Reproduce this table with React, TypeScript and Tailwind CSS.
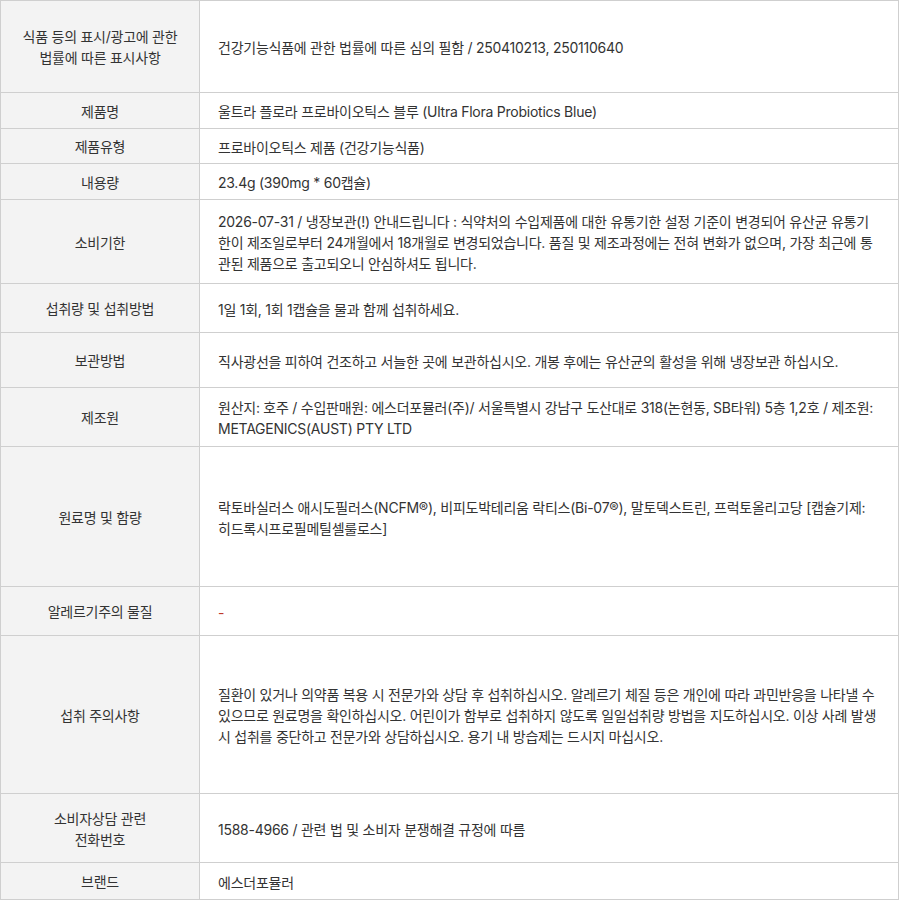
import React from "react";

const rows: { label: string[]; value: React.ReactNode; h: string }[] = [
  {
    label: ["식품 등의 표시/광고에 관한", "법률에 따른 표시사항"],
    value: "건강기능식품에 관한 법률에 따른 심의 필함 / 250410213, 250110640",
    h: "h-[92px]",
  },
  {
    label: ["제품명"],
    value: "울트라 플로라 프로바이오틱스 블루 (Ultra Flora Probiotics Blue)",
    h: "h-[36px]",
  },
  { label: ["제품유형"], value: "프로바이오틱스 제품 (건강기능식품)", h: "h-[35px]" },
  { label: ["내용량"], value: "23.4g (390mg * 60캡슐)", h: "h-[36px]" },
  {
    label: ["소비기한"],
    value:
      "2026-07-31 / 냉장보관(!) 안내드립니다 : 식약처의 수입제품에 대한 유통기한 설정 기준이 변경되어 유산균 유통기한이 제조일로부터 24개월에서 18개월로 변경되었습니다. 품질 및 제조과정에는 전혀 변화가 없으며, 가장 최근에 통관된 제품으로 출고되오니 안심하셔도 됩니다.",
    h: "h-[84px]",
  },
  { label: ["섭취량 및 섭취방법"], value: "1일 1회, 1회 1캡슐을 물과 함께 섭취하세요.", h: "h-[49px]" },
  {
    label: ["보관방법"],
    value: "직사광선을 피하여 건조하고 서늘한 곳에 보관하십시오. 개봉 후에는 유산균의 활성을 위해 냉장보관 하십시오.",
    h: "h-[55px]",
  },
  {
    label: ["제조원"],
    value:
      "원산지: 호주 / 수입판매원: 에스더포뮬러(주)/ 서울특별시 강남구 도산대로 318(논현동, SB타워) 5층 1,2호 / 제조원: METAGENICS(AUST) PTY LTD",
    h: "h-[59px]",
  },
  {
    label: ["원료명 및 함량"],
    value:
      "락토바실러스 애시도필러스(NCFM®), 비피도박테리움 락티스(Bi-07®), 말토덱스트린, 프럭토올리고당 [캡슐기제: 히드록시프로필메틸셀룰로스]",
    h: "h-[140px]",
  },
  {
    label: ["알레르기주의 물질"],
    value: <span className="text-[#c0392b]">-</span>,
    h: "h-[49px]",
  },
  {
    label: ["섭취 주의사항"],
    value:
      "질환이 있거나 의약품 복용 시 전문가와 상담 후 섭취하십시오. 알레르기 체질 등은 개인에 따라 과민반응을 나타낼 수 있으므로 원료명을 확인하십시오. 어린이가 함부로 섭취하지 않도록 일일섭취량 방법을 지도하십시오. 이상 사례 발생 시 섭취를 중단하고 전문가와 상담하십시오. 용기 내 방습제는 드시지 마십시오.",
    h: "h-[158px]",
  },
  {
    label: ["소비자상담 관련", "전화번호"],
    value: "1588-4966 / 관련 법 및 소비자 분쟁해결 규정에 따름",
    h: "h-[69px]",
  },
  { label: ["브랜드"], value: "에스더포뮬러", h: "h-[36px]" },
];

export default function App() {
  return (
    <div
      className="w-[899px] bg-white text-[14px] leading-[21px] tracking-[-0.25px] text-[#333]"
      style={{ fontFamily: 'Inter, "Noto Sans CJK KR", sans-serif' }}
    >
      <div className="border border-[#cfcfcf]">
        {rows.map((r, i) => (
          <div
            key={i}
            className={`flex ${r.h} ${i < rows.length - 1 ? "border-b border-[#cfcfcf]" : ""}`}
          >
            <div className="w-[199px] shrink-0 bg-[#f3f3f3] border-r border-[#cfcfcf] flex flex-col items-center justify-center text-center pt-px">
              {r.label.map((l) => (
                <p key={l}>{l}</p>
              ))}
            </div>
            <div className="flex-1 flex items-center pl-[18px] pr-[20px] pt-[2px]">
              <p>{r.value}</p>
            </div>
          </div>
        ))}
      </div>
    </div>
  );
}
